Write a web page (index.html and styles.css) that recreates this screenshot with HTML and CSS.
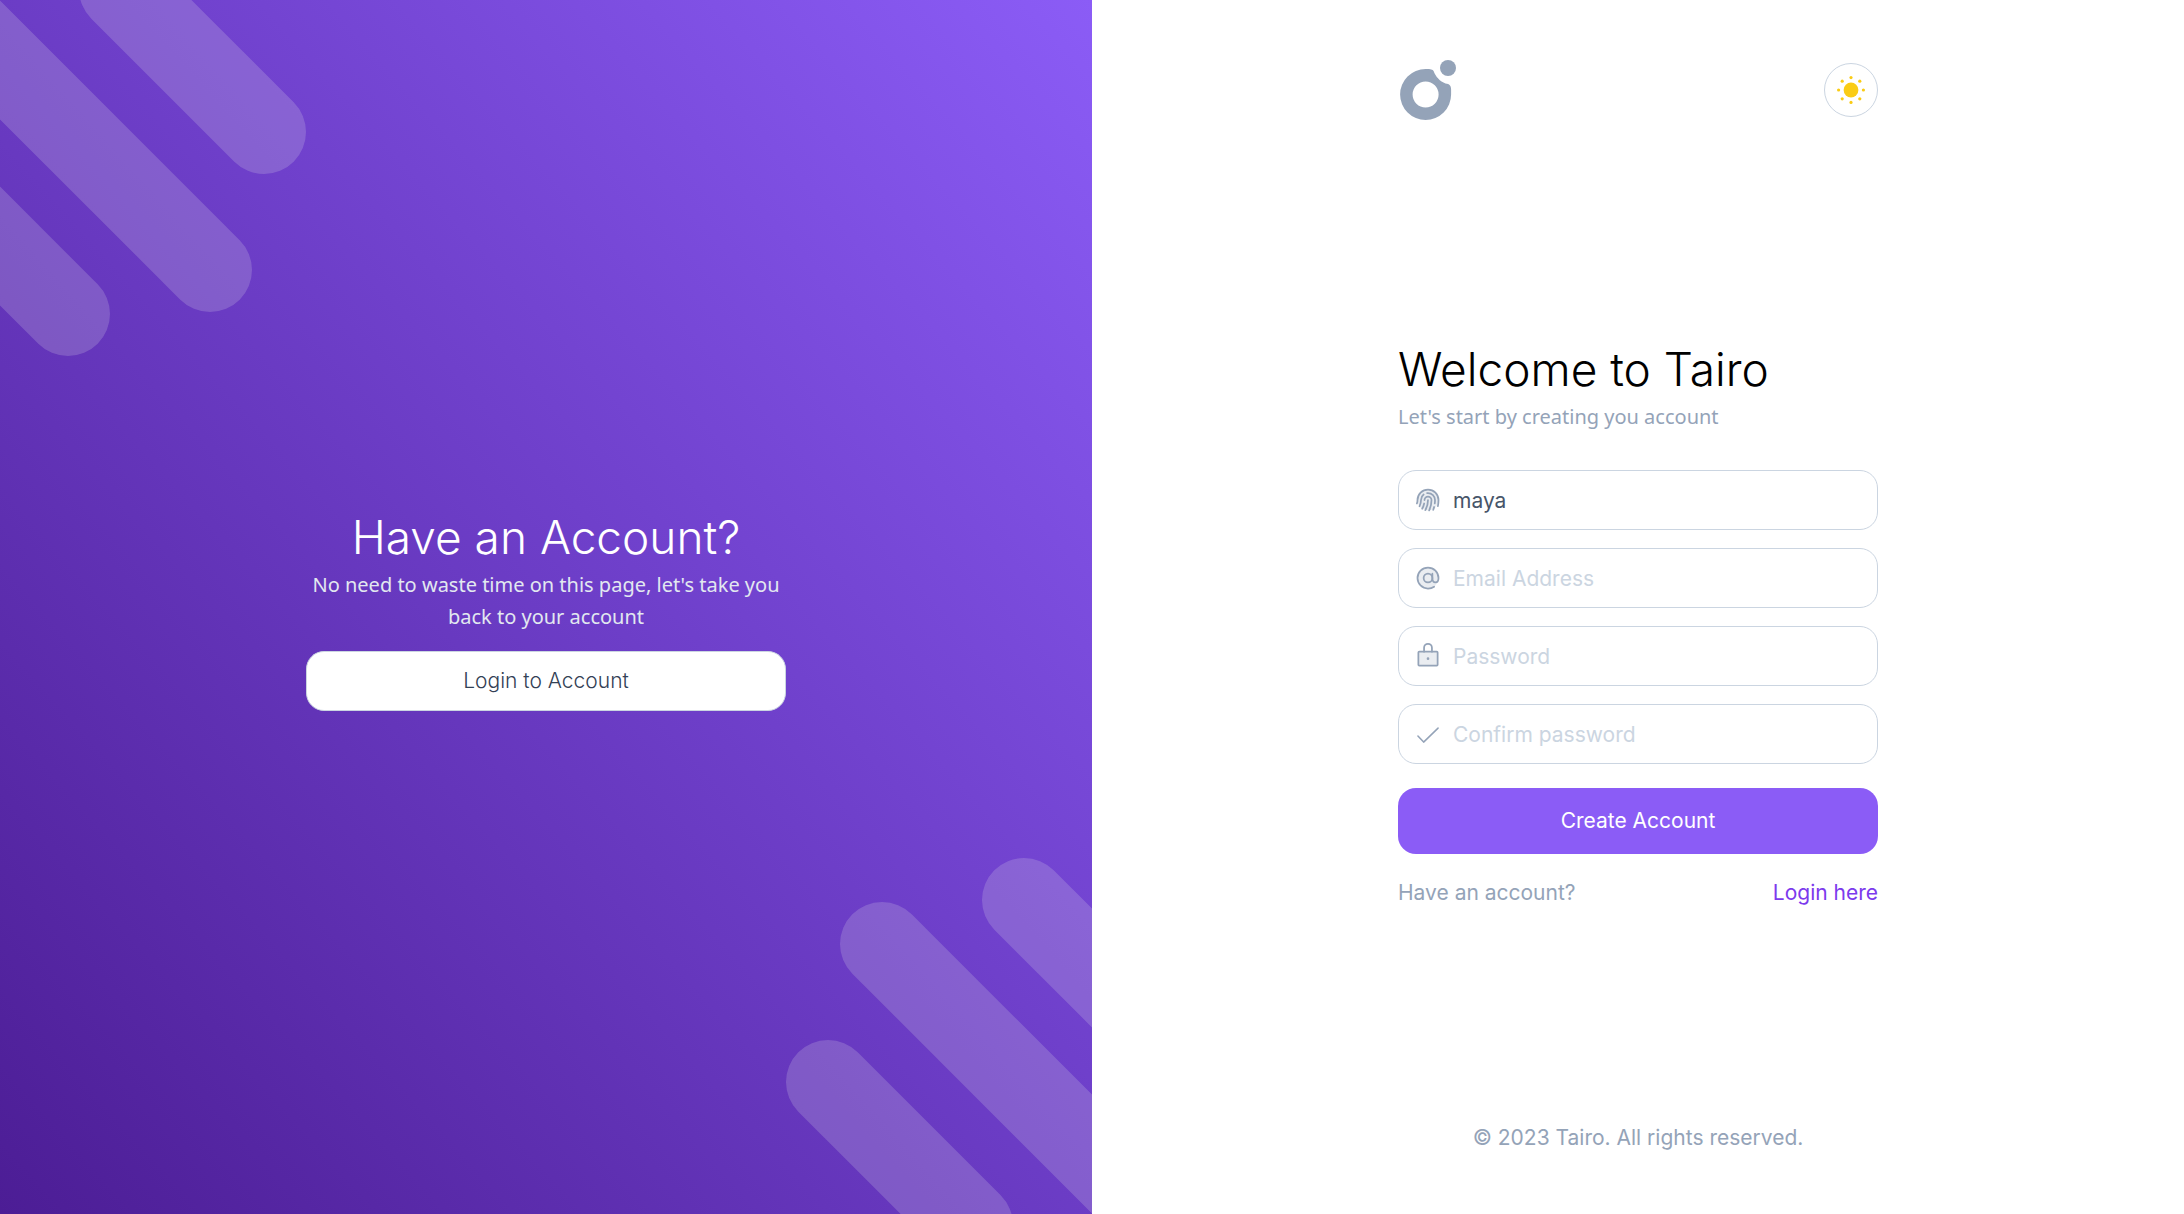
FILE: index.html
```html
<!DOCTYPE html>
<html lang="en">
<head>
<meta charset="utf-8">
<title>Tairo - Sign up</title>
<meta name="viewport" content="width=device-width, initial-scale=1">
<link rel="stylesheet" href="styles.css">
</head>
<body>
<div class="page">
  <section class="promo">
    <svg class="stripes stripes-top" viewBox="0 0 320 370" aria-hidden="true">
      <path d="M121-11 264 132M-90-30 210 270M-75 171 68 314"/>
    </svg>
    <svg class="stripes stripes-bottom" viewBox="0 0 320 370" aria-hidden="true">
      <path d="M121-11 264 132M-90-30 210 270M-75 171 68 314"/>
    </svg>
    <div class="promo-content">
      <h2 class="title">Have an Account?</h2>
      <p class="subtitle">No need to waste time on this page, let's take you back to your account</p>
      <button class="button button-light" type="button">Login to Account</button>
    </div>
  </section>
  <section class="signup">
    <header class="header">
      <a class="logo" href="#" aria-label="Tairo home">
        <svg viewBox="-2 1 62 62">
          <path fill-rule="evenodd" d="M25.600 11C31 11 32.500 11.300 33.700 13.300C35.500 18.500 40 23.700 45.500 25.400C49.500 25.800 51.100 27.500 51.100 31.500V36.500A25.500 25.500 0 1 1 25.600 11ZM25.600 23.500A13 13 0 1 0 25.600 49.500A13 13 0 1 0 25.600 23.500Z"/>
          <circle cx="48" cy="10" r="8"/>
        </svg>
      </a>
      <button class="theme-toggle" type="button" aria-label="Toggle theme">
        <svg viewBox="0 0 28 28">
          <circle cx="14" cy="14" r="7.400"/>
          <circle cx="14" cy="1.600" r="1.600"/><circle cx="14" cy="26.400" r="1.600"/>
          <circle cx="1.600" cy="14" r="1.600"/><circle cx="26.400" cy="14" r="1.600"/>
          <circle cx="5.200" cy="5.200" r="1.600"/><circle cx="22.800" cy="5.200" r="1.600"/>
          <circle cx="5.200" cy="22.800" r="1.600"/><circle cx="22.800" cy="22.800" r="1.600"/>
        </svg>
      </button>
    </header>
    <main class="main">
      <h1 class="title">Welcome to Tairo</h1>
      <p class="subtitle">Let's start by creating you account</p>
      <form class="form">
        <div class="fields">
          <label class="field">
            <svg class="icon" viewBox="0 0 256 256" aria-hidden="true">
              <circle class="tint" cx="128" cy="128" r="96"/>
              <path d="M50.700 184.900A127.500 127.500 0 0 0 64 128a63.800 63.800 0 0 1 24-49.900M128 128a191.100 191.100 0 0 1-24 93M96 128a32 32 0 0 1 64 0 223.100 223.100 0 0 1-21.300 95.400M218.600 184a288.800 288.800 0 0 0 5.400-56 96 96 0 0 0-192 0 95.800 95.800 0 0 1-5.500 32M92.800 160a158.900 158.900 0 0 1-18.100 47.900M120 64.500a66 66 0 0 1 8-.500 64 64 0 0 1 64 64 259.900 259.900 0 0 1-2 32M183.900 192c-2.100 8.700-4.700 17.400-7.600 25.800"/>
            </svg>
            <input type="text" aria-label="Username" placeholder="Username" value="maya">
          </label>
          <label class="field">
            <svg class="icon" viewBox="0 0 256 256" aria-hidden="true">
              <circle class="tint" cx="128" cy="128" r="96"/>
              <circle cx="128" cy="128" r="40"/>
              <path d="M184 208c-15.200 10.100-36.400 16-56 16a96 96 0 1 1 96-96c0 22.100-8 40-28 40s-28-17.900-28-40V88"/>
            </svg>
            <input type="email" aria-label="Email Address" placeholder="Email Address">
          </label>
          <label class="field">
            <svg class="icon" viewBox="0 0 256 256" aria-hidden="true">
              <rect class="tint" x="40" y="88" width="176" height="128" rx="8"/>
              <rect x="40" y="88" width="176" height="128" rx="8"/>
              <path d="M92 88V52a36 36 0 0 1 72 0v36"/>
              <circle class="dot" cx="128" cy="152" r="12"/>
            </svg>
            <input type="password" aria-label="Password" placeholder="Password">
          </label>
          <label class="field">
            <svg class="icon icon-check" viewBox="0 0 256 256" aria-hidden="true">
              <path d="M36 146 88 202 220 74"/>
            </svg>
            <input type="password" aria-label="Confirm password" placeholder="Confirm password">
          </label>
        </div>
        <button class="button button-primary" type="submit">Create Account</button>
      </form>
      <p class="switch"><span>Have an account?</span><a href="#">Login here</a></p>
    </main>
    <footer class="footer">© 2023 Tairo. All rights reserved.</footer>
  </section>
</div>
</body>
</html>
```
FILE: styles.css
```css
*, *::before, *::after { box-sizing: border-box; }

body {
  margin: 0;
  background: #fff;
  color: #000;
  font-family: Inter, sans-serif;
  font-size: 21px;
  font-weight: 400;
  line-height: 32px;
}

h1, h2, p { margin: 0; }
input, button { font: inherit; }
a { text-decoration: none; }

.page {
  display: grid;
  grid-template-columns: 1fr 1fr;
  min-height: 100vh;
}

.promo {
  position: relative;
  overflow: hidden;
  display: flex;
  align-items: center;
  justify-content: center;
  padding: 10px 24px 0;
  background: linear-gradient(to top right, #4c1d95, #8b5cf6);
  color: #fff;
}

.stripes {
  position: absolute;
  width: 320px;
  height: 370px;
  fill: none;
  stroke: #e5e7eb;
  stroke-opacity: .2;
  stroke-width: 84px;
  stroke-linecap: round;
}
.stripes-top { top: 0; left: 0; }
.stripes-bottom { right: 0; bottom: 0; transform: rotate(180deg); }

.promo-content {
  position: relative;
  width: 100%;
  max-width: 480px;
  text-align: center;
}

.title {
  margin-bottom: 8px;
  font-size: 46px;
  font-weight: 300;
  line-height: 48px;
}

.subtitle {
  font-family: "Noto Sans", sans-serif;
  font-size: 20px;
  color: #94a3b8;
}
.promo .subtitle {
  margin-bottom: 18px;
  color: #e2e8f0;
}

.button {
  display: block;
  width: 100%;
  padding: 0 20px;
  border: 0;
  border-radius: 18px;
  cursor: pointer;
}
.button-light {
  height: 60px;
  border: 1px solid #cbd5e1;
  background: #fff;
  color: #334155;
  font-weight: 300;
}
.button-primary {
  height: 66px;
  background: #8b5cf6;
  color: #fff;
}

.signup {
  display: flex;
  flex-direction: column;
  width: 100%;
  max-width: 480px;
  margin: 0 auto;
  padding: 59px 0 60px;
}

.header {
  display: flex;
  align-items: center;
  justify-content: space-between;
  margin-bottom: 11px;
}
.logo svg {
  display: block;
  width: 62px;
  height: 62px;
  fill: #94a3b8;
}
.theme-toggle {
  display: flex;
  align-items: center;
  justify-content: center;
  width: 54px;
  height: 54px;
  padding: 0;
  border: 1px solid #cbd5e1;
  border-radius: 50%;
  background: #fff;
  cursor: pointer;
}
.theme-toggle svg {
  width: 28px;
  height: 28px;
  fill: #facc15;
}

.main {
  flex: 1;
  display: flex;
  flex-direction: column;
  justify-content: center;
}

.form { margin: 37px 0 23px; }
.fields {
  display: grid;
  gap: 18px;
  margin-bottom: 24px;
}
.field {
  display: flex;
  align-items: center;
  gap: 11px;
  height: 60px;
  padding: 0 15px;
  border: 1px solid #cbd5e1;
  border-radius: 18px;
  background: #fff;
}
.field input {
  flex: 1;
  min-width: 0;
  height: 100%;
  padding: 0;
  border: 0;
  outline: 0;
  background: none;
  color: #475569;
}
.field input::placeholder { color: #cbd5e1; opacity: 1; }

.icon {
  flex: none;
  width: 28px;
  height: 28px;
  fill: none;
  stroke: #94a3b8;
  stroke-width: 16;
  stroke-linecap: round;
  stroke-linejoin: round;
}
.icon .tint { fill: #94a3b8; fill-opacity: .2; stroke: none; }
.icon .dot { fill: #94a3b8; stroke: none; }
.icon-check { stroke-width: 14; }

.switch {
  display: flex;
  justify-content: space-between;
  color: #94a3b8;
}
.switch a { color: #7c3aed; }

.footer {
  color: #94a3b8;
  text-align: center;
}
```
